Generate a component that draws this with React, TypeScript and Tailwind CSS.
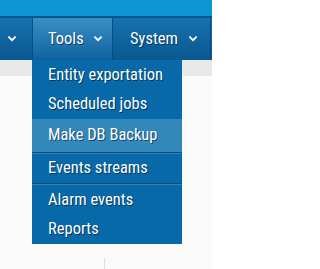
import React from "react";

function Chevron() {
  return (
    <svg width="8" height="6" viewBox="0 0 8 6" className="shrink-0">
      <path d="M1 1.2 L4 4.2 L7 1.2" fill="none" stroke="#ffffff" strokeWidth="1.8" strokeLinecap="square" />
    </svg>
  );
}

function Sep() {
  return <div className="w-px h-full bg-[#04507f] shrink-0" />;
}

function MenuItem({ label, h, active }: { label: string; h: string; active?: boolean }) {
  return (
    <div className={`${h} flex items-center pl-[16px] whitespace-nowrap ${active ? "bg-[#3287bb]" : ""}`}>
      {label}
    </div>
  );
}

function Divider() {
  return (
    <div className="flex flex-col">
      <div className="h-px bg-[#06507f]" />
      <div className="h-px bg-[#2f82b8]" />
    </div>
  );
}

export default function App() {
  return (
    <div className="w-[212px] h-[269px] overflow-hidden relative bg-[#fafafa] font-['Roboto',sans-serif] font-stretch-condensed font-normal text-[16.5px] text-white [text-shadow:1px_1px_0_rgba(0,0,0,0.5)]">
      <div className="h-[16px] bg-[#0b95d3]" />
      <div className="h-[2px] bg-[#05548a]" />
      <div className="h-[42px] flex bg-gradient-to-b from-[#1772b0] to-[#07588f]">
        <div className="w-[32px] flex items-center pl-[8px]">
          <Chevron />
        </div>
        <Sep />
        <div className="w-[79px] flex items-center pl-[15px] gap-[10px] bg-gradient-to-b from-[#3a8fc6] to-[#0b62a0]">
          <span>Tools</span>
          <Chevron />
        </div>
        <Sep />
        <div className="w-[97px] flex items-center pl-[17px] gap-[11px]">
          <span>System</span>
          <Chevron />
        </div>
        <Sep />
      </div>
      <div className="h-[16px] bg-[#e9e9e9]" />
      <div className="flex">
        <div className="ml-[104px] mt-[182px] w-px h-[12px] bg-[#dedede]" />
      </div>
      <div className="absolute left-[32px] top-[60px] w-[150px] bg-[#0769a8] flex flex-col">
        <MenuItem label="Entity exportation" h="h-[30px]" />
        <MenuItem label="Scheduled jobs" h="h-[29px]" />
        <MenuItem label="Make DB Backup" h="h-[33px]" active />
        <Divider />
        <MenuItem label="Events streams" h="h-[29px]" />
        <Divider />
        <MenuItem label="Alarm events" h="h-[30px]" />
        <MenuItem label="Reports" h="h-[29px]" />
      </div>
    </div>
  );
}
